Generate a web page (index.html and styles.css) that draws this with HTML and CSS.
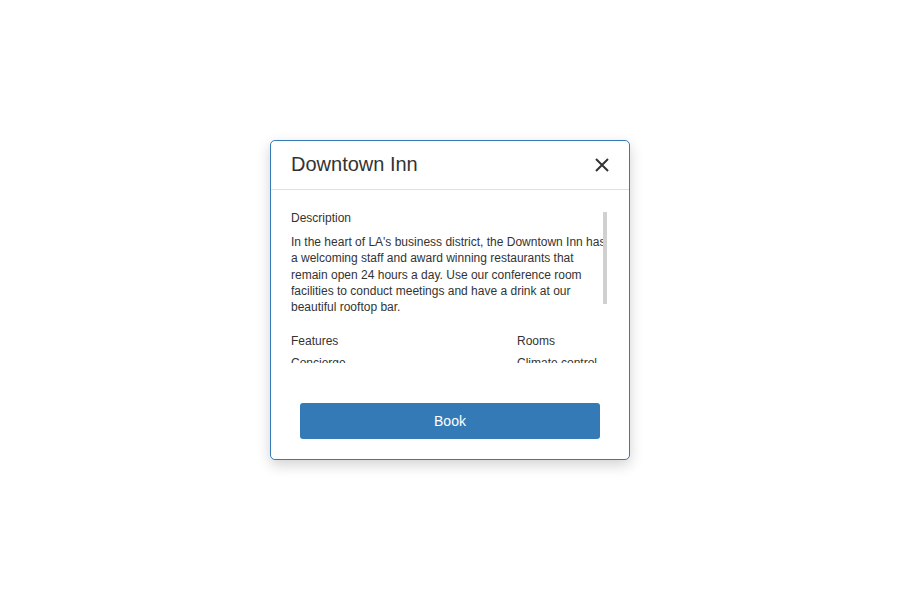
FILE: index.html
```html
<!DOCTYPE html>
<html>
<head>
<meta charset="utf-8">
<link rel="stylesheet" href="styles.css">
</head>
<body>
<div class="stage">
  <div class="modal">
    <div class="modal-header">
      <h2 class="modal-title">Downtown Inn</h2>
      <span class="close" aria-label="Close">
        <svg width="16" height="16" viewBox="0 0 16 16"><path d="M2 2 L14 14 M14 2 L2 14" stroke="#333" stroke-width="2" fill="none"/></svg>
      </span>
    </div>
    <div class="modal-body">
      <div class="scroll">
        <div class="scroll-content">
          <div class="label">Description</div>
          <p class="desc">In the heart of LA's business district, the Downtown Inn has a welcoming staff and award winning restaurants that remain open 24 hours a day. Use our conference room facilities to conduct meetings and have a drink at our beautiful rooftop bar.</p>
          <div class="cols">
            <div class="col">
              <div class="label">Features</div>
              <ul class="list">
                <li>Concierge</li>
                <li>Restaurant</li>
                <li>Fitness center</li>
                <li>Business center</li>
              </ul>
            </div>
            <div class="col">
              <div class="label">Rooms</div>
              <ul class="list">
                <li>Climate control</li>
                <li>Wi-Fi</li>
                <li>Flat-screen TV</li>
                <li>Mini bar</li>
              </ul>
            </div>
          </div>
        </div>
        <div class="thumb"></div>
      </div>
    </div>
    <div class="modal-footer">
      <button class="btn">Book</button>
    </div>
  </div>
</div>
</body>
</html>
```
FILE: styles.css
```css
html, body {
  margin: 0;
  padding: 0;
  background: #fff;
}
body {
  font-family: "Liberation Sans", Arial, sans-serif;
  color: #333;
}
.stage {
  width: 900px;
  height: 600px;
  display: flex;
  align-items: center;
  justify-content: center;
}
.modal {
  width: 360px;
  height: 320px;
  box-sizing: border-box;
  border: 1px solid #337ab7;
  border-radius: 5px;
  background: #fff;
  box-shadow: 0 5px 14px rgba(0, 0, 0, 0.18);
  display: flex;
  flex-direction: column;
}
.modal-header {
  display: flex;
  align-items: center;
  justify-content: space-between;
  padding: 10px 20px;
  border-bottom: 1px solid #e0e0e0;
}
.modal-title {
  margin: 0;
  font-size: 20px;
  font-weight: normal;
  line-height: 27px;
  padding-bottom: 1px;
  color: #333;
}
.close {
  display: flex;
  width: 16px;
  height: 16px;
  margin-right: -1px;
}
.modal-body {
  padding: 20px 20px 0;
}
.scroll {
  position: relative;
  height: 153px;
  overflow: hidden;
}
.scroll-content {
  font-size: 12px;
  line-height: 1.35;
}
.label {
  font-size: 12px;
}
.desc {
  margin: 8px 0 18px;
}
.cols {
  display: grid;
  grid-template-columns: 1fr 92px;
}
.list {
  list-style: none;
  margin: 6px 0 0;
  padding: 0;
}
.list li {
  margin-bottom: 8px;
}
.thumb {
  position: absolute;
  top: 2px;
  right: 2px;
  width: 4px;
  height: 92px;
  background: #d0d0d0;
}
.modal-footer {
  flex: 1;
  display: flex;
  justify-content: center;
  align-items: flex-end;
  padding: 0 20px 20px;
}
.btn {
  width: 300px;
  height: 36px;
  border: none;
  border-radius: 3px;
  background: #337ab7;
  color: #fff;
  font-family: "Liberation Sans", Arial, sans-serif;
  font-size: 14px;
  cursor: pointer;
}
```
